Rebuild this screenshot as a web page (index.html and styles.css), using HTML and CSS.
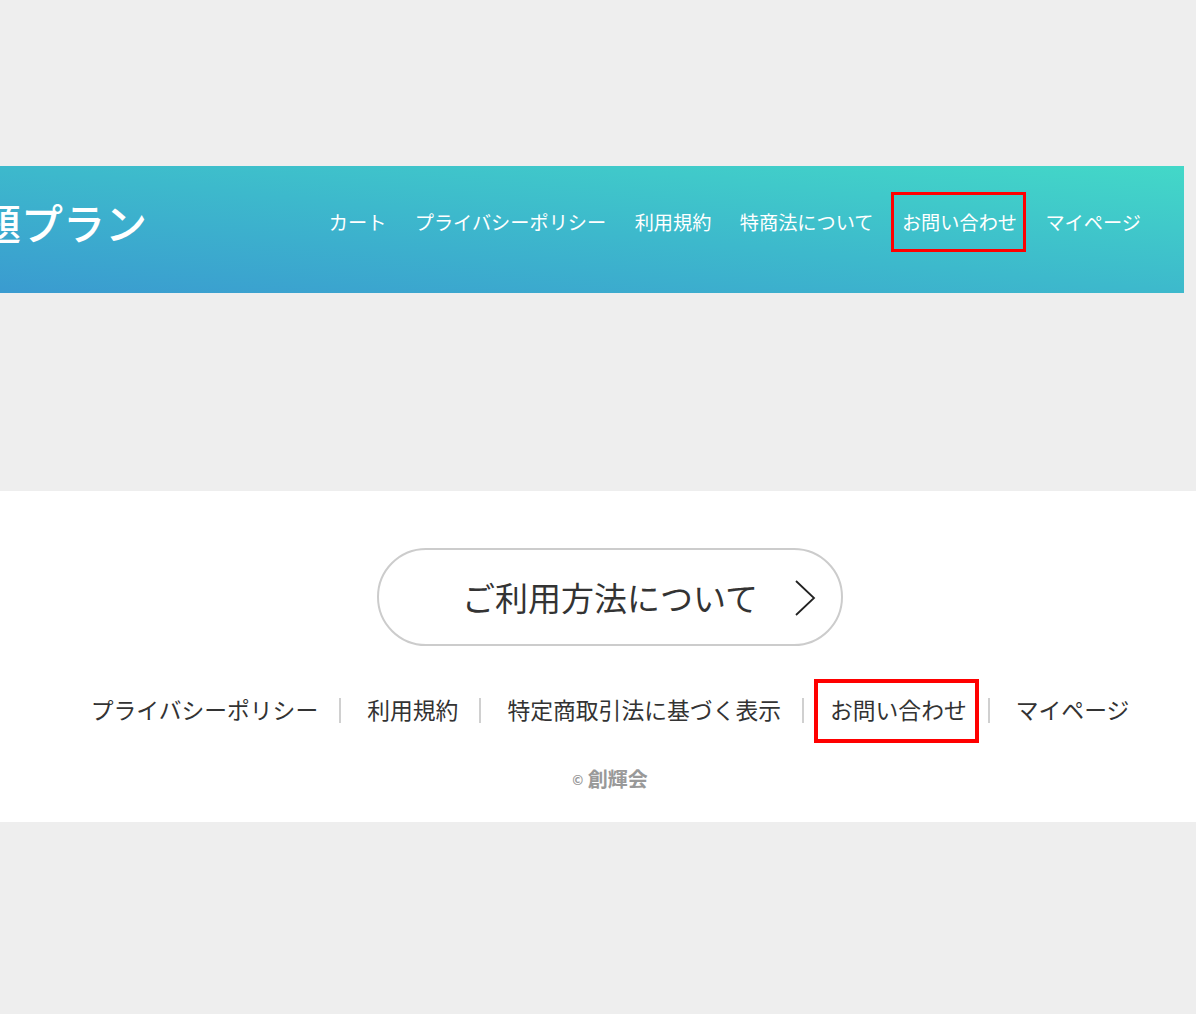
FILE: index.html
```html
<!DOCTYPE html>
<html lang="ja">
<head>
<meta charset="utf-8">
<title>題プラン</title>
<link rel="stylesheet" href="styles.css">
</head>
<body>
<div class="top-space"></div>
<header class="site-header">
  <div class="site-title">題プラン</div>
  <nav class="main-nav">
    <a class="nav-link">カート</a>
    <a class="nav-link">プライバシーポリシー</a>
    <a class="nav-link">利用規約</a>
    <a class="nav-link">特商法について</a>
    <a class="nav-link nav-mark">お問い合わせ</a>
    <a class="nav-link">マイページ</a>
  </nav>
</header>
<div class="mid-space"></div>
<footer class="site-footer">
  <div class="footer-inner">
    <a class="guide-btn">
      <span class="guide-text">ご利用方法について</span>
      <svg class="guide-arrow" width="22" height="36" viewBox="0 0 22 36"><polyline points="2,1 20,18 2,35" fill="none" stroke="#222" stroke-width="1.8"/></svg>
    </a>
    <ul class="footer-links">
      <li class="footer-item"><a>プライバシーポリシー</a></li>
      <li class="footer-item"><a>利用規約</a></li>
      <li class="footer-item"><a>特定商取引法に基づく表示</a></li>
      <li class="footer-item"><a class="foot-mark">お問い合わせ</a></li>
      <li class="footer-item"><a>マイページ</a></li>
    </ul>
    <p class="copyright"><span class="copy-sign">©</span> 創輝会</p>
  </div>
</footer>
</body>
</html>
```

FILE: styles.css
```css
html, body {
  margin: 0;
  padding: 0;
  background: #eeeeee;
  font-family: "Noto Sans CJK JP", "Noto Sans", sans-serif;
}
a { text-decoration: none; color: inherit; }

.top-space { height: 166px; }

.site-header {
  width: 1184px;
  height: 127px;
  box-sizing: border-box;
  padding: 0 43px 16px 0;
  display: flex;
  align-items: center;
  justify-content: space-between;
  background: linear-gradient(to top right, #3a9bd0 0%, #3db9cc 50%, #43d8c8 100%);
  overflow: hidden;
}
.site-title {
  margin-left: -21px;
  color: #fff;
  font-size: 42px;
  font-weight: 500;
  line-height: 50px;
}
.main-nav {
  display: flex;
  align-items: center;
  gap: 28.4px;
}
.nav-link {
  color: #fff;
  font-size: 19.2px;
  line-height: 28px;
  position: relative;
}
.nav-mark::after {
  content: "";
  position: absolute;
  left: -11px;
  right: -9px;
  top: -16px;
  bottom: -16px;
  border: 3px solid #f00;
}

.mid-space { height: 198px; }

.site-footer {
  background: #fff;
  height: 331px;
}
.footer-inner {
  padding: 57px 0 0 24px;
  display: flex;
  flex-direction: column;
  align-items: center;
}
.guide-btn {
  position: relative;
  width: 466px;
  height: 98px;
  box-sizing: border-box;
  border: 2px solid #cccccc;
  border-radius: 49px;
  display: flex;
  align-items: center;
  justify-content: center;
  color: #333;
}
.guide-text {
  font-size: 33px;
  line-height: 40px;
}
.guide-arrow {
  position: absolute;
  right: 25px;
  top: 30px;
}
.footer-links {
  list-style: none;
  margin: 48px 0 0 0;
  padding: 0;
  display: flex;
  align-items: center;
  height: 32px;
}
.footer-item {
  display: flex;
  align-items: center;
  font-size: 22.8px;
  line-height: 32px;
  color: #333;
}
.footer-item + .footer-item::before {
  content: "";
  display: block;
  width: 2px;
  height: 25px;
  background: #d0d0d0;
  margin: 0 26px 0 21px;
}
.foot-mark { position: relative; }
.foot-mark::after {
  content: "";
  position: absolute;
  left: -16px;
  right: -12px;
  top: -15px;
  bottom: -17px;
  border: 4px solid #f00;
}
.copyright {
  margin: 39px 0 0 0;
  font-size: 20px;
  line-height: 28px;
  color: #999;
  font-weight: 700;
}
.copy-sign { font-size: 13px; vertical-align: 2px; }
```
